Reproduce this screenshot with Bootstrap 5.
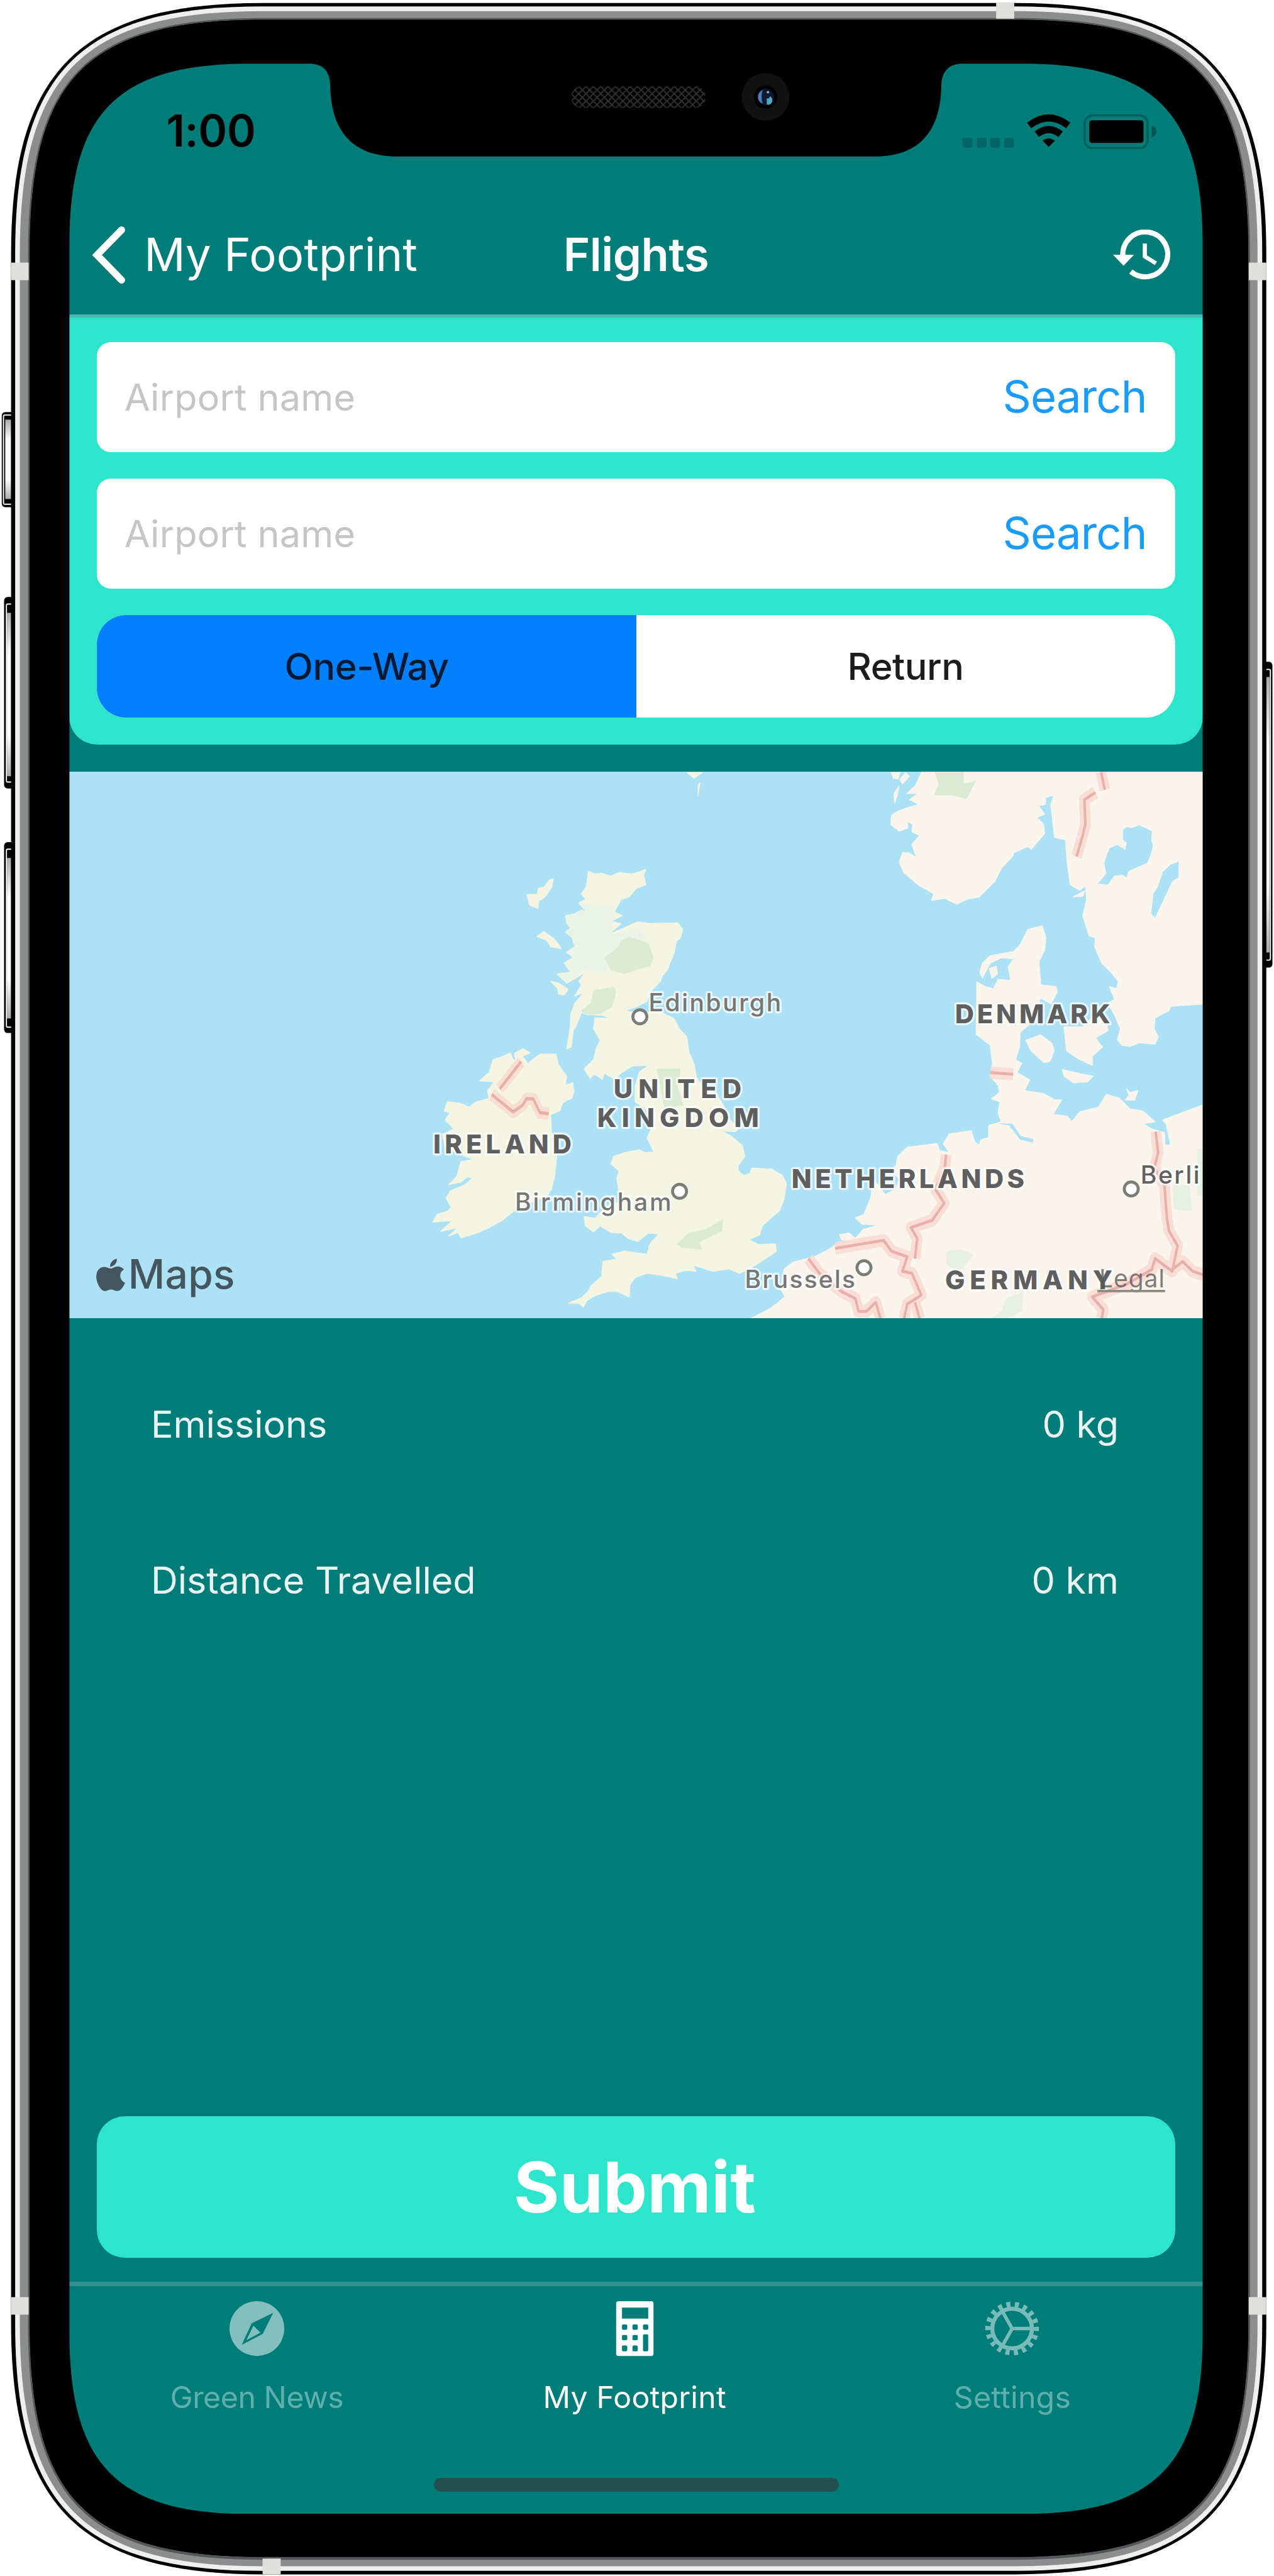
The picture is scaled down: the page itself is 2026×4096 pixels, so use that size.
<!DOCTYPE html>
<html lang="en">
<head>
<meta charset="utf-8">
<meta name="viewport" content="width=device-width, initial-scale=1">
<title>Flights</title>
<link href="https://cdn.jsdelivr.net/npm/bootstrap@5.3.0/dist/css/bootstrap.min.css" rel="stylesheet">
<style>
  /* 1rem = 10 design units */
  html { font-size: 9.28px; }
  body { margin: 0; background: #fff; font-family: Inter, "Liberation Sans", sans-serif; overflow: hidden; }
  .device { width: 218.3rem; height: 441.4rem; padding: 10.9rem 12.2rem 10.65rem 11.9rem; overflow: hidden; }
  .shell { position: absolute; left: 0; top: 0; width: 218.3rem; height: 441.4rem; pointer-events: none; }
  .screen { position: relative; background: #007d79; border-radius: 15rem; overflow: hidden; }
  .statusbar { height: 23.1rem; padding: 0 7.7rem 0 16.6rem; }
  .clock { font-size: 7.5rem; font-weight: 600; line-height: 1; color: #000; letter-spacing: -.04rem; }
  .navtop { height: 20.4rem; padding: 0 5.4rem .5rem 3.8rem; border-bottom: .6rem solid #4ab9b0; color: #fff; font-size: 7.8rem; line-height: 1; }
  .navtop .back { letter-spacing: .01rem; }
  .navtitle { font-weight: 600; letter-spacing: -.05rem; padding-left: 1.6rem; }
  .navside { flex: 1 1 0; }
  .panel { background: #2ce5ca; padding: 4.2rem 4.7rem 4.6rem; border-radius: 0 0 4.8rem 4.8rem; gap: 4.55rem; }
  .field { height: 18.85rem; background: #fff; border-radius: 2.4rem; }
  .field .form-control { border: 0; background: transparent; font-size: 6.4rem; padding: 0 0 0 4.7rem; letter-spacing: .02rem; line-height: 1.2; }
  .field .form-control::placeholder { color: #c5c5c7; opacity: 1; }
  .field .btn { font-size: 7.6rem; color: #199bff; padding: 0 4.9rem 0 0; border: 0; line-height: 1; letter-spacing: -.09rem; }
  .segment { height: 17.6rem; border-radius: 5rem; overflow: hidden; background: #fff; }
  .segment .btn { border: 0; border-radius: 0; font-size: 6.4rem; font-weight: 500; color: #1c1c1e; line-height: 1; flex: 1 1 0; letter-spacing: -.05rem; }
  .segment .btn.active { background: #007fff; color: #001a33; }
  .mapview { margin-top: 4.6rem; height: 93.7rem; background: #ade1f5; }
  .mapview svg { width: 100%; height: 100%; display: block; }
  .stats { padding: 4.8rem 14.4rem 0 13.95rem; }
  .stats .statline { height: 26.75rem; font-size: 6.4rem; line-height: 1; color: #e8f4f3; letter-spacing: -.01rem; }
  .submit { margin: 0 4.7rem 4.2rem; height: 24.2rem; border-radius: 4.8rem; background: #2ce5ca; color: #fff; font-size: 12rem; font-weight: 700; line-height: 1; border: 0; letter-spacing: .01rem; padding-right: 1.2rem; }
  .tabs { border-top: .8rem solid #32908d; height: 39.75rem; padding-top: 2.4rem; }
  .tabs .tab { height: 20rem; color: #fff; font-size: 5.2rem; line-height: 1; gap: 4.4rem; letter-spacing: .02rem; padding-right: .5rem; }
  .tabs .tab svg { width: 9.6rem; height: 9.6rem; }
  .tabs .dim { color: #5fb0ad; }
  .tabs .tight { letter-spacing: -.05rem; }
  .homebar { width: 69.4rem; height: 2.4rem; border-radius: 1.2rem; background: #22504f; margin: 10.4rem auto 0; }
</style>
</head>
<body>
<div class="device position-relative">
  <!-- metal band, antenna lines and side buttons -->
  <svg class="shell" viewBox="0 0 2183 4414" preserveAspectRatio="none">
    <defs>
      <linearGradient id="key" x1="0" y1="0" x2="0" y2="1"><stop offset="0" stop-color="#aaa"/><stop offset=".25" stop-color="#fff"/><stop offset=".75" stop-color="#fff"/><stop offset="1" stop-color="#aaa"/></linearGradient>
    </defs>
    <g fill="#000">
      <rect x="3" y="706" width="24" height="163" rx="6"/><rect x="7" y="1023" width="20" height="328" rx="6"/><rect x="7" y="1443" width="20" height="327" rx="6"/><rect x="2156" y="1134" width="24.5" height="524" rx="6"/>
    </g>
    <g fill="none" stroke="#fff" stroke-width="2">
      <path d="M20 711H8q-2 0-2 2v149q0 2 2 2h12M20 1035h-7q-2 0-2 3v299q0 3 2 3h7M20 1455h-7q-2 0-2 3v299q0 3 2 3h7M2170 1147h5q2 0 2 3v492q0 3-2 3h-5"/>
    </g>
    <g fill="url(#key)">
      <rect x="9" y="719" width="10" height="136"/><rect x="12" y="1050" width="7" height="280"/><rect x="12" y="1470" width="7" height="275"/><rect x="2170" y="1160" width="5.5" height="472"/>
    </g>
    <path fill="#000" d="M19 435c0-312 118-430 430-430H1740c312 0 430 118 430 430V3981c0 312-118 430-430 430H449c-312 0-430-118-430-430z"/>
    <path fill="#efefef" d="M26 433c0-309 113-422 422-422H1741c309 0 422 113 422 422V3983c0 309-113 422-422 422H448c-309 0-422-113-422-422z"/>
    <path fill="#8c8e8e" d="M34 434c0-306 109-415 415-415H1740c306 0 415 109 415 415V3982c0 306-109 415-415 415H449c-306 0-415-109-415-415z"/>
    <path fill="#55565a" d="M48 434c0-302 101-403 403-403H1739c302 0 403 101 403 403V3983c0 302-101 403-403 403H451c-302 0-403-101-403-403z"/>
    <g fill="#dfe0db">
      <rect x="19" y="450" width="30" height="30"/><rect x="2140" y="450" width="30" height="30"/><rect x="19" y="3936" width="30" height="30"/><rect x="2140" y="3936" width="30" height="30"/><rect x="1707" y="4" width="31" height="28"/><rect x="450" y="4384" width="31" height="27"/>
    </g>
    <path fill="#000" d="M51 434c0-301 99-400 400-400H1739c301 0 400 99 400 400V3981c0 301-99 400-400 400H451c-301 0-400-99-400-400z"/>
  </svg>

  <main class="screen d-flex flex-column h-100">
    <div class="statusbar d-flex align-items-center justify-content-between flex-shrink-0">
      <span class="clock">1:00</span>
      <svg style="width:33.6rem;height:6.2rem" viewBox="1648 193 336 62">
        <g fill="#006563"><rect x="1650" y="235" width="17" height="17" rx="4"/><rect x="1674" y="235" width="17" height="17" rx="4"/><rect x="1697" y="235" width="17" height="17" rx="4"/><rect x="1721" y="235" width="17" height="17" rx="4"/></g>
        <path fill="none" stroke="#000" stroke-width="12" d="M1764 214q33.500-26 67 0M1777 229q20.500-16 41 0"/>
        <path d="M1787 240q10.500-8 21 0l-10.500 11z"/>
        <rect x="1859" y="197" width="108" height="56" rx="14" fill="none" stroke="#00605e" stroke-width="4"/>
        <rect x="1867" y="205" width="93" height="39" rx="5"/>
        <path fill="#005654" d="M1974 214q8 3 8 10.500t-8 10.500z"/>
      </svg>
    </div>

    <nav class="navtop d-flex align-items-center flex-shrink-0">
      <div class="navside d-flex align-items-center">
        <svg style="width:5.8rem;height:9.8rem;margin-right:3.2rem" viewBox="0 0 58 98"><path d="M51 6L9 49l42 43" fill="none" stroke="#fff" stroke-width="12" stroke-linecap="round"/></svg>
        <span class="back text-nowrap">My Footprint</span>
      </div>
      <span class="navtitle">Flights</span>
      <div class="navside d-flex justify-content-end">
        <svg style="width:10rem;height:8.800rem" viewBox="1907 393 100 88">
          <g fill="none" stroke="#fff" stroke-width="9"><path d="M1924 440a38.500 38.500 0 1 1 13.500 25"/><path d="M1961.500 417v22l19 12" stroke-width="7"/></g>
          <path fill="#fff" d="M1907 436h36l-18 19z"/>
        </svg>
      </div>
    </nav>

    <section class="panel d-flex flex-column flex-shrink-0">
      <div class="field input-group flex-nowrap">
        <input class="form-control shadow-none" type="text" placeholder="Airport name"><button class="btn" type="button">Search</button>
      </div>
      <div class="field input-group flex-nowrap">
        <input class="form-control shadow-none" type="text" placeholder="Airport name"><button class="btn" type="button">Search</button>
      </div>
      <div class="segment btn-group">
        <button class="btn active" type="button">One-Way</button><button class="btn" type="button">Return</button>
      </div>
    </section>

    <section class="mapview flex-shrink-0">
      <svg viewBox="119 1322 1942 937" preserveAspectRatio="none">
        <defs>
          <path id="britain" d="M716 308L740 316 765 314 800 322 830 312 880 316 930 304 922 318 930 345 895 355 868 378 838 385 812 420 842 430 800 445 838 452 790 482 830 470 900 447 950 452 1050 450 1068 468 1060 490 1045 500 1035 535 1020 560 1012 578 992 595 985 610 945 640 935 665 895 680 850 690 900 697 985 695 1035 712 1055 740 1083 762 1092 805 1112 840 1118 870 1140 900 1195 920 1228 960 1240 985 1275 1015 1265 1022 1210 1020 1250 1035 1290 1060 1300 1090 1275 1115 1275 1130 1295 1142 1318 1138 1325 1122 1400 1125 1440 1142 1455 1165 1445 1210 1428 1240 1395 1260 1365 1280 1355 1305 1315 1318 1350 1332 1415 1330 1417 1350 1395 1362 1345 1385 1310 1400 1280 1410 1240 1398 1180 1405 1140 1395 1105 1388 1118 1405 1080 1402 1040 1410 1048 1425 985 1415 935 1410 890 1422 872 1440 868 1475 825 1460 790 1460 745 1470 710 1485 698 1503 680 1492 643 1492 690 1478 715 1460 725 1445 765 1420 770 1378 820 1372 805 1358 850 1350 935 1358 945 1330 980 1302 940 1300 900 1323 865 1315 840 1300 800 1298 760 1280 735 1297 705 1280 700 1255 740 1260 760 1245 800 1220 850 1215 830 1190 822 1150 830 1130 800 1110 810 1090 850 1080 905 1072 930 1080 960 1078 935 1040 950 1015 955 990 930 960 890 940 890 900 905 860 940 840 880 842 840 860 815 878 775 862 768 878 740 865 722 875 700 850 735 825 745 795 760 772 735 740 740 710 800 712 770 703 705 700 690 695 668 735 660 745 652 790 635 795 648 735 650 700 665 670 700 640 665 650 690 620 680 610 705 585 670 600 635 615 600 590 650 585 625 560 660 545 635 530 665 515 655 490 630 475 650 465 635 450 630 430 665 425 690 415 710 420 680 395 705 385 690 370 708 350z"/>
          <clipPath id="inland"><use href="#britain"/></clipPath>
          <path id="eire-line" d="M465 830L385 905M355 920L435 968 470 950 485 932 510 932 535 970 568 973"/>
          <path id="euro-lines" d="M1018 36L1030 85M1000 92L965 112 968 180 958 215 940 268M665 860L738 865M524 1085L520 1120 490 1180 518 1218 480 1265 412 1285 432 1315 425 1370M170 1342L325 1320 350 1350 400 1365 385 1405 415 1410 445 1470 400 1495 390 1535M425 1490L440 1535M85 1370L120 1410 190 1460 235 1480 245 1515 270 1515 300 1490 315 1535M1192 1022L1200 1080 1188 1120 1220 1170 1228 1260 1235 1295 1262 1335 1245 1405 1190 1370 1180 1400 1100 1440 990 1475 1025 1510 1020 1535M1245 1400L1278 1378 1310 1405 1345 1415"/>
        </defs>
        <!-- British Isles -->
        <g transform="translate(680 1300) scale(.4592 .625)">
          <g fill="#f3f5e2" stroke="#f3f5e2" stroke-width="3" stroke-linejoin="round">
            <use href="#britain"/>
            <path d="M585 330L580 350 555 378 530 390 528 410 510 405 495 400 487 372 525 372 530 355 550 352 570 332zM525 487L550 473 590 495 615 520 575 515 560 497zM575 610L605 615 640 632 625 648 605 645 600 628zM1085 38h55l-30 15zM1125 75l8-10-8 35z"/>
            <path d="M310 883L345 860 360 825 400 815 425 806 435 825 445 828 440 808 470 795 498 806 470 815 490 835 535 810 595 810 605 840 635 870 630 895 658 888 662 910 655 930 620 942 610 965 575 975 580 1040 598 1090 590 1145 578 1180 565 1195 445 1235 395 1265 345 1285 300 1300 240 1313 230 1298 195 1308 230 1285 165 1295 210 1265 135 1270 150 1250 190 1240 205 1230 185 1205 200 1185 250 1170 285 1150 265 1145 240 1160 195 1167 225 1145 240 1105 290 1098 240 1085 180 1060 170 1030 215 1015 182 990 200 970 178 965 190 940 240 945 270 955 300 940 345 932 340 910 365 885z"/>
          </g>
          <g clip-path="url(#inland)">
            <path fill="#eaf3e5" d="M590 390L812 405 800 480 900 465 935 490 830 515 780 585 700 578 640 615 590 620z"/>
            <path fill="#dbebd3" d="M830 515L835 500 870 488 940 505 960 545 945 570 910 575 850 590 800 580 775 545zM735 635L810 625 820 640 805 680 765 698 695 705 690 690 725 670zM970 850L1060 850 1050 900 1070 950 1000 960 985 900zM1045 1330L1090 1300 1150 1290 1220 1262 1215 1295 1130 1325 1140 1345 1060 1340z"/>
          </g>
          <g fill="none" stroke-linejoin="round">
            <use href="#eire-line" stroke="#f8dfd2" stroke-width="34"/>
            <use href="#eire-line" stroke="#e9b1a5" stroke-width="9"/>
          </g>
        </g>
        <!-- mainland -->
        <g transform="translate(1340 1300) scale(.5376 .625)">
          <g fill="#f9f5ec" stroke="#f9f5ec" stroke-width="3" stroke-linejoin="round">
            <path d="M450 30L425 75 400 95 435 95 408 112 438 125 400 135 372 143 350 155 348 180 375 198 402 190 400 170 418 180 415 200 440 210 415 235 430 270 405 258 385 258 375 285 390 312 435 345 485 370 478 388 520 382 558 398 590 385 630 378 680 335 700 300 738 265 738 258 785 240 795 248 838 205 835 180 812 160 838 152 818 128 840 125 842 105 868 100 858 125 870 215 905 222 910 285 920 345 950 360 968 348 972 385 960 430 980 485 1000 490 998 515 1020 560 1050 585 1073 610 1068 630 1045 625 1062 660 1040 670 1060 700 1080 740 1070 770 1085 785 1110 788 1140 778 1190 782 1200 762 1187 740 1190 710 1235 690 1240 678 1345 672 1345 30z"/>
            <path d="M830 458L842 490 838 525 820 555 826 620 875 625 878 640 858 672 825 655 815 680 800 720 760 750 758 790 745 825 765 835 750 860 790 880 775 910 835 918 870 935 892 935 865 975 910 980 925 995 950 968 1010 955 1035 920 1075 930 1110 960 1150 965 1190 995 1150 1000 1180 1015 1220 1025 1222 1060 1240 1058 1225 1000 1215 990 1345 948 1345 1540-110 1540-32 1505 11 1475-2 1455 7 1400 36 1380 105 1365 150 1345 185 1325 240 1330 190 1318 185 1305 215 1300 235 1315 260 1290 310 1278 255 1275 235 1258 262 1250 285 1200 290 1150 330 1195 365 1180 375 1150 345 1130 365 1115 370 1090 400 1065 495 1055 505 1075 535 1080 515 1055 535 1028 605 1020 615 1050 630 1060 635 1045 660 1038 660 1005 690 998 700 995 690 970 695 940 668 932 695 915 690 895 665 870 672 835 665 785 620 755 622 612 650 625 675 630 690 605 730 608 722 570 740 548 700 545 665 560 640 600 632 585 640 560 665 540 740 528 760 510 785 468z"/>
            <path d="M350 38h28l-8 17-14-2zM395 38l12 10-22 20-8-12zM358 95l15-18-5 25-8 18zM662 575l22-6 4 20-18 12zM778 772L825 757 862 780 868 800 855 830 835 832 795 800zM900 735L960 735 1000 700 1035 715 1040 745 1000 765 1022 790 990 815 990 840 945 822 908 800zM895 852L960 865 992 870 975 885 930 888 900 870zM1100 905l10 10 25-5-10 25-30 0 12-12zM930 378l35-15-5 14z"/>
          </g>
          <g fill="#ade1f5">
            <path d="M1088 195L1100 187 1115 190 1140 182 1180 198 1178 220 1183 240 1175 265 1165 285 1130 298 1105 308 1100 325 1085 318 1060 320 1040 345 1008 342 1035 315 1028 285 1045 245 1070 236 1095 250 1100 230 1088 222zM1265 282L1265 325 1245 335 1215 390 1190 435 1178 425 1185 370 1200 350 1215 310 1240 290z"/>
            <path d="M690 1000L735 1000 762 1034 803 1043 800 1052 760 1044 725 1005z"/>
          </g>
          <path fill="#dbebd3" d="M485 30h95l0 38 40-8-30 50-50-10-55 0 15-30z"/>
          <path fill="#e8f0e2" d="M525 1350L570 1345 612 1358 580 1395 550 1402 525 1385zM1245 1165L1300 1170 1310 1240 1250 1235zM1325 1070h20v130h-20zM715 1480L772 1460 765 1515 720 1535 665 1535 700 1515z"/>
          <g fill="none" stroke-linejoin="round">
            <use href="#euro-lines" stroke="#f8d9d1" stroke-width="34" stroke-opacity=".85"/>
            <use href="#euro-lines" stroke="#e8b0a8" stroke-width="8"/>
          </g>
        </g>
        <!-- cities -->
        <g fill="#fff" stroke="#7b7d77" stroke-width="5">
          <circle cx="1097" cy="1742" r="12"/><circle cx="1165" cy="2041" r="12"/><circle cx="1481" cy="2172" r="12"/><circle cx="1939" cy="2037" r="12"/>
        </g>
        <g font-family="Inter, sans-serif" paint-order="stroke" stroke="#fff" stroke-opacity=".75" stroke-width="7" stroke-linejoin="round">
          <g font-size="42" font-weight="500" fill="#767676">
            <text x="1112" y="1733" textLength="227">Edinburgh</text>
            <text x="883" y="2074" textLength="268">Birmingham</text>
            <text x="1277" y="2207" textLength="189">Brussels</text>
            <text x="1955" y="2028" textLength="101" fill="#606060">Berli</text>
          </g>
          <g font-size="45" font-weight="800" fill="#5f5f5f">
            <text x="1052" y="1881" textLength="219">UNITED</text>
            <text x="1024" y="1931" textLength="277">KINGDOM</text>
            <text x="743" y="1976" textLength="237">IRELAND</text>
            <text x="1357" y="2035" textLength="399">NETHERLANDS</text>
            <text x="1637" y="1753" textLength="266">DENMARK</text>
            <text x="1620" y="2209" textLength="287">GERMANY</text>
          </g>
        </g>
        <text x="1884" y="2206" font-family="Inter, sans-serif" font-size="42" fill="#555" fill-opacity=".75" textLength="112">Legal</text>
        <path stroke="#8a8a86" stroke-width="4" d="M1881 2212h116"/>
        <g fill="#45565f">
          <path transform="translate(22 268) scale(.88)" d="M203 2146c1 8-5 15-13 16-1-8 6-15 13-16zM191 2165c4 0 8-4 14-4 4 0 9 2 12 6-11 6-9 21 2 26-3 8-9 16-15 16-5 0-6-3-12-3s-8 3-12 3c-9 0-17-17-17-28 0-13 8-19 15-19 6 0 9 3 13 3z"/>
          <text x="220" y="2208" font-family="Inter, sans-serif" font-size="69" font-weight="500" textLength="183">Maps</text>
        </g>
      </svg>
    </section>

    <section class="stats flex-shrink-0">
      <div class="statline d-flex align-items-center justify-content-between"><span>Emissions</span><span>0 kg</span></div>
      <div class="statline d-flex align-items-center justify-content-between"><span>Distance Travelled</span><span>0 km</span></div>
    </section>

    <button class="submit btn mt-auto flex-shrink-0" type="button">Submit</button>

    <footer class="tabs flex-shrink-0">
      <div class="row g-0 text-center">
        <div class="col tab dim tight d-flex flex-column align-items-center">
          <svg viewBox="0 0 96 96"><path fill="#82bfbd" fill-rule="evenodd" d="M48 1a47 47 0 1 0 0 94a47 47 0 1 0 0-94zM76 21L58 57 22 76 39 39z"/><path fill="#82bfbd" d="M42 43L54 55 30 68z"/></svg>
          <span>Green News</span>
        </div>
        <div class="col tab d-flex flex-column align-items-center">
          <svg viewBox="0 0 96 96"><path fill="#fff" fill-rule="evenodd" d="M20 1h56q4 0 4 4v86q0 4-4 4H20q-4 0-4-4V5q0-4 4-4zM26 12v19h45V12z"/>
            <g fill="#007d79"><rect x="26" y="41" width="9" height="9" rx="2"/><rect x="44" y="41" width="9" height="9" rx="2"/><rect x="62" y="41" width="9" height="9" rx="2"/><rect x="26" y="59" width="9" height="9" rx="2"/><rect x="44" y="59" width="9" height="9" rx="2"/><rect x="62" y="58" width="9" height="29" rx="2"/><rect x="26" y="77" width="9" height="10" rx="2"/><rect x="44" y="77" width="9" height="10" rx="2"/></g></svg>
          <span>My Footprint</span>
        </div>
        <div class="col tab dim d-flex flex-column align-items-center">
          <svg viewBox="0 0 96 96"><g fill="none" stroke="#78bbb8"><circle cx="48" cy="48" r="34" stroke-width="7"/><circle cx="48" cy="48" r="41.500" stroke-width="9" stroke-dasharray="7 7.486" transform="rotate(-4 48 48)"/><path stroke-width="6" d="M48 48h34M48 48L31 18M48 48L31 78"/></g></svg>
          <span>Settings</span>
        </div>
      </div>
      <div class="homebar"></div>
    </footer>
  </main>

  <!-- black bezel with the notch, speaker and camera -->
  <svg class="shell" viewBox="0 0 2183 4414" preserveAspectRatio="none">
    <defs>
      <pattern id="mesh" width="12.600" height="12.600" patternUnits="userSpaceOnUse" x="979" y="148"><path d="M0 0L12.600 12.600M12.600 0L0 12.600" stroke="#303030" stroke-width="2.200"/></pattern>
    </defs>
    <path fill-rule="evenodd" d="M51 434c0-301 99-400 400-400H1739c301 0 400 99 400 400V3981c0 301-99 400-400 400H451c-301 0-400-99-400-400zM119 419c0-227 83-310 310-310H530C556 109 566 124 566 150C568 225 605 268 680 268H1500C1575 268 1611 225 1613 150C1613 124 1624 109 1650 109H1751c227 0 310 83 310 310V3997.500c0 227-83 310-310 310H429c-227 0-310-83-310-310z"/>
    <rect x="979" y="148" width="230" height="37" rx="17" fill="url(#mesh)"/>
    <circle cx="1312" cy="166" r="41" fill="#111"/>
    <circle cx="1312" cy="166" r="20" fill="#000"/>
    <circle cx="1312" cy="166" r="14" fill="#0d1a30"/>
    <path fill="#4d7fb8" d="M1307 154q-9 5-8 14 2 8 8 9-4-10 0-23z"/>
    <path fill="#56a6c4" d="M1314 168q3 3 6-3 5 4 3 10-4 6-9 4z"/>
    <circle cx="1316" cy="158" r="2" fill="#93c4e6"/>
  </svg>
</div>
<script src="https://cdn.jsdelivr.net/npm/bootstrap@5.3.0/dist/js/bootstrap.bundle.min.js"></script>
</body>
</html>
